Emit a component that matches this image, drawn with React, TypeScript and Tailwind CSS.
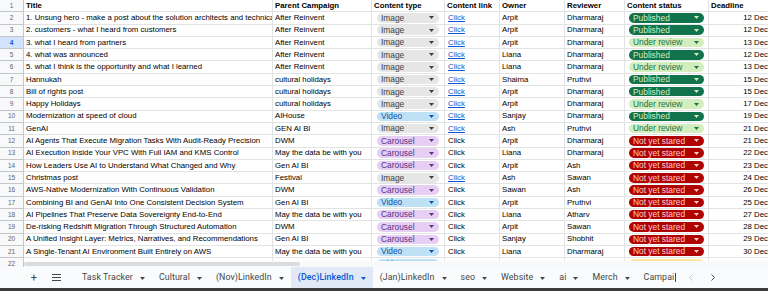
import React from "react";

type Kind = "Image" | "Video" | "Carousel";
type Status = "Published" | "Under review" | "Not yet stared" | "Pending";

type Row = {
  title: string;
  campaign: string;
  kind: Kind;
  linked: boolean;
  owner: string;
  reviewer: string;
  status: Status;
  deadline: string;
};

const ROWS: Row[] = [
  { title: "1. Unsung hero - make a post about the solution architects and technical account managers", campaign: "After Reinvent", kind: "Image", linked: true, owner: "Arpit", reviewer: "Dharmaraj", status: "Published", deadline: "12 Dec" },
  { title: "2. customers - what I heard from customers", campaign: "After Reinvent", kind: "Image", linked: true, owner: "Arpit", reviewer: "Dharmaraj", status: "Published", deadline: "12 Dec" },
  { title: "3. what I heard from partners", campaign: "After Reinvent", kind: "Image", linked: true, owner: "Arpit", reviewer: "Dharmaraj", status: "Under review", deadline: "13 Dec" },
  { title: "4. what was announced", campaign: "After Reinvent", kind: "Image", linked: true, owner: "Liana", reviewer: "Dharmaraj", status: "Published", deadline: "12 Dec" },
  { title: "5. what I think is the opportunity and what I learned", campaign: "After Reinvent", kind: "Image", linked: true, owner: "Liana", reviewer: "Dharmaraj", status: "Under review", deadline: "13 Dec" },
  { title: "Hannukah", campaign: "cultural holidays", kind: "Image", linked: true, owner: "Shaima", reviewer: "Pruthvi", status: "Published", deadline: "15 Dec" },
  { title: "Bill of rights post", campaign: "cultural holidays", kind: "Image", linked: true, owner: "Arpit", reviewer: "Dharmaraj", status: "Published", deadline: "15 Dec" },
  { title: "Happy Holidays", campaign: "cultural holidays", kind: "Image", linked: true, owner: "Arpit", reviewer: "Dharmaraj", status: "Under review", deadline: "17 Dec" },
  { title: "Modernization at speed of cloud", campaign: "AIHouse", kind: "Video", linked: true, owner: "Sanjay", reviewer: "Dharmaraj", status: "Published", deadline: "19 Dec" },
  { title: "GenAI", campaign: "GEN AI BI", kind: "Image", linked: true, owner: "Ash", reviewer: "Pruthvi", status: "Under review", deadline: "21 Dec" },
  { title: "AI Agents That Execute Migration Tasks With Audit-Ready Precision", campaign: "DWM", kind: "Carousel", linked: false, owner: "Arpit", reviewer: "Dharmaraj", status: "Not yet stared", deadline: "21 Dec" },
  { title: "AI Execution Inside Your VPC With Full IAM and KMS Control", campaign: "May the data be with you", kind: "Carousel", linked: false, owner: "Liana", reviewer: "Dharmaraj", status: "Not yet stared", deadline: "22 Dec" },
  { title: "How Leaders Use AI to Understand What Changed and Why", campaign: "Gen AI BI", kind: "Carousel", linked: false, owner: "Arpit", reviewer: "Ash", status: "Not yet stared", deadline: "23 Dec" },
  { title: "Christmas post", campaign: "Festival", kind: "Image", linked: true, owner: "Ash", reviewer: "Sawan", status: "Not yet stared", deadline: "24 Dec" },
  { title: "AWS-Native Modernization With Continuous Validation", campaign: "DWM", kind: "Carousel", linked: false, owner: "Sawan", reviewer: "Ash", status: "Not yet stared", deadline: "26 Dec" },
  { title: "Combining BI and GenAI Into One Consistent Decision System", campaign: "Gen AI BI", kind: "Video", linked: false, owner: "Arpit", reviewer: "Pruthvi", status: "Not yet stared", deadline: "25 Dec" },
  { title: "AI Pipelines That Preserve Data Sovereignty End-to-End", campaign: "May the data be with you", kind: "Carousel", linked: false, owner: "Liana", reviewer: "Atharv", status: "Not yet stared", deadline: "27 Dec" },
  { title: "De-risking Redshift Migration Through Structured Automation", campaign: "DWM", kind: "Carousel", linked: false, owner: "Arpit", reviewer: "Sawan", status: "Not yet stared", deadline: "28 Dec" },
  { title: "A Unified Insight Layer: Metrics, Narratives, and Recommendations", campaign: "Gen AI BI", kind: "Carousel", linked: false, owner: "Sanjay", reviewer: "Shobhit", status: "Not yet stared", deadline: "29 Dec" },
  { title: "A Single-Tenant AI Environment Built Entirely on AWS", campaign: "May the data be with you", kind: "Video", linked: false, owner: "Liana", reviewer: "Dharmaraj", status: "Not yet stared", deadline: "30 Dec" },
  { title: "", campaign: "", kind: "Video", linked: false, owner: "", reviewer: "", status: "Pending", deadline: "" },
];

const KIND_STYLE: Record<Kind, string> = {
  Image: "bg-[#e6e6e6] text-[#3d3d3d]",
  Video: "bg-[#bfe1f6] text-[#0a53a8]",
  Carousel: "bg-[#e6cff2] text-[#5a3286]",
};

const STATUS_STYLE: Record<Status, string> = {
  Published: "bg-[#11734b] text-[#d4edbc]",
  "Under review": "bg-[#d4edbc] text-[#11734b]",
  "Not yet stared": "bg-[#b10202] text-[#ffcfc9]",
  Pending: "bg-[#ffe5a0] text-[#473821]",
};

const GRID =
  "grid grid-cols-[24px_249px_99px_73px_55px_65px_60px_84px_61px] auto-rows-[12.3px]";
const CELL =
  "flex items-center overflow-hidden whitespace-nowrap border-b border-r border-[#e2e3e3] px-[2px]";

function Caret({ className }: { className?: string }) {
  return (
    <svg width="5" height="3" viewBox="0 0 5 3" className={className}>
      <path d="M0 0h5L2.5 3z" fill="currentColor" />
    </svg>
  );
}

function Chip({ label, style }: { label: string; style: string }) {
  return (
    <div
      className={`flex h-[9.5px] w-full items-center justify-between rounded-full pl-[4px] pr-[5px] text-[8.4px] ${style}`}
    >
      <span className="leading-none">{label === "Pending" ? "" : label}</span>
      <Caret />
    </div>
  );
}

function Tab({ name, active }: { name: string; active?: boolean }) {
  return (
    <div
      className={`flex h-full items-center gap-[7px] px-[7px] ${
        active ? "bg-[#e1e9f7] font-medium text-[#0b57d0]" : "text-[#444746]"
      }`}
    >
      <span>{name}</span>
      <Caret className="mt-[1px]" />
    </div>
  );
}

export default function App() {
  return (
    <div className="flex h-[291px] w-[768px] flex-col overflow-hidden bg-white font-['Liberation_Sans',Arial,sans-serif] text-[7.8px] text-black">
      <div className="relative h-[267px] overflow-hidden">
        <div className={GRID}>
          <div className="flex items-center justify-center border-b border-r border-[#c4c7c5] bg-[#f8f9fa] text-[6.5px] text-[#5f6368]">
            1
          </div>
          {["Title", "Parent Campaign", "Content type", "Content link", "Owner", "Reviewer", "Content status", "Deadline"].map(
            (h) => (
              <div key={h} className={`${CELL} font-bold`}>
                {h}
              </div>
            )
          )}

          {ROWS.map((r, i) => {
            const n = i + 2;
            const selected = n === 4;
            return (
              <React.Fragment key={n}>
                <div
                  className={`flex items-center justify-center border-b border-r border-[#c4c7c5] text-[6.5px] ${
                    selected ? "bg-[#d3e3fd] font-bold text-[#0b57d0]" : "bg-[#f8f9fa] text-[#5f6368]"
                  }`}
                >
                  {n}
                </div>
                <div className={CELL}>{r.title}</div>
                <div className={CELL}>{r.campaign}</div>
                <div className={`${CELL} px-[5px]`}>
                  <Chip label={r.kind} style={KIND_STYLE[r.kind]} />
                </div>
                <div className={`${CELL} pl-[3px]`}>
                  {r.title &&
                    (r.linked ? (
                      <span className="text-[#1155cc] underline">Click</span>
                    ) : (
                      <span>Click</span>
                    ))}
                </div>
                <div className={CELL}>{r.owner}</div>
                <div className={CELL}>{r.reviewer}</div>
                <div className={`${CELL} px-[4px]`}>
                  <Chip label={r.status} style={STATUS_STYLE[r.status]} />
                </div>
                <div className={`${CELL} justify-end pr-[1px]`}>{r.deadline}</div>
              </React.Fragment>
            );
          })}
        </div>
        {/* horizontal scrollbar overlay */}
        <div className="absolute bottom-0 left-[24px] right-0 h-[6px] bg-[#f8f9fa]">
          <div className="mt-[1px] h-[4px] w-[276px] rounded-full bg-[#dadce0]" />
        </div>
      </div>

      <div className="flex h-[21px] items-center bg-[#f9fbfd] font-['Roboto',Arial,sans-serif] text-[8.8px] tracking-[0.1px]">
        <span className="ml-[29px] w-[10px] text-center text-[11px] leading-none text-[#444746]">+</span>
        <svg width="9" height="7" viewBox="0 0 9 7" className="ml-[13px] text-[#444746]">
          <path d="M0 0.5h9M0 3.5h9M0 6.5h9" stroke="currentColor" strokeWidth="1" />
        </svg>
        <div className="ml-[14px] flex h-full items-center">
          <Tab name="Task Tracker" />
          <Tab name="Cultural" />
          <Tab name="(Nov)LinkedIn" />
          <Tab name="(Dec)LinkedIn" active />
          <Tab name="(Jan)LinkedIn" />
          <Tab name="seo" />
          <Tab name="Website" />
          <Tab name="ai" />
          <Tab name="Merch" />
          <div className="flex h-full items-center px-[7px] text-[#444746]">
            <span>Campai</span>
            <span className="ml-[1px] h-[9px] w-px bg-[#444746]" />
          </div>
          <svg width="4" height="7" viewBox="0 0 4 7" className="ml-[6px] text-[#c4c7c5]">
            <path d="M3.5 0.5L0.5 3.5l3 3" fill="none" stroke="currentColor" strokeWidth="1" />
          </svg>
          <svg width="4" height="7" viewBox="0 0 4 7" className="ml-[18px] text-[#444746]">
            <path d="M0.5 0.5l3 3-3 3" fill="none" stroke="currentColor" strokeWidth="1" />
          </svg>
        </div>
      </div>
      <div className="h-[3px] bg-[#3c3c3c]" />
    </div>
  );
}
